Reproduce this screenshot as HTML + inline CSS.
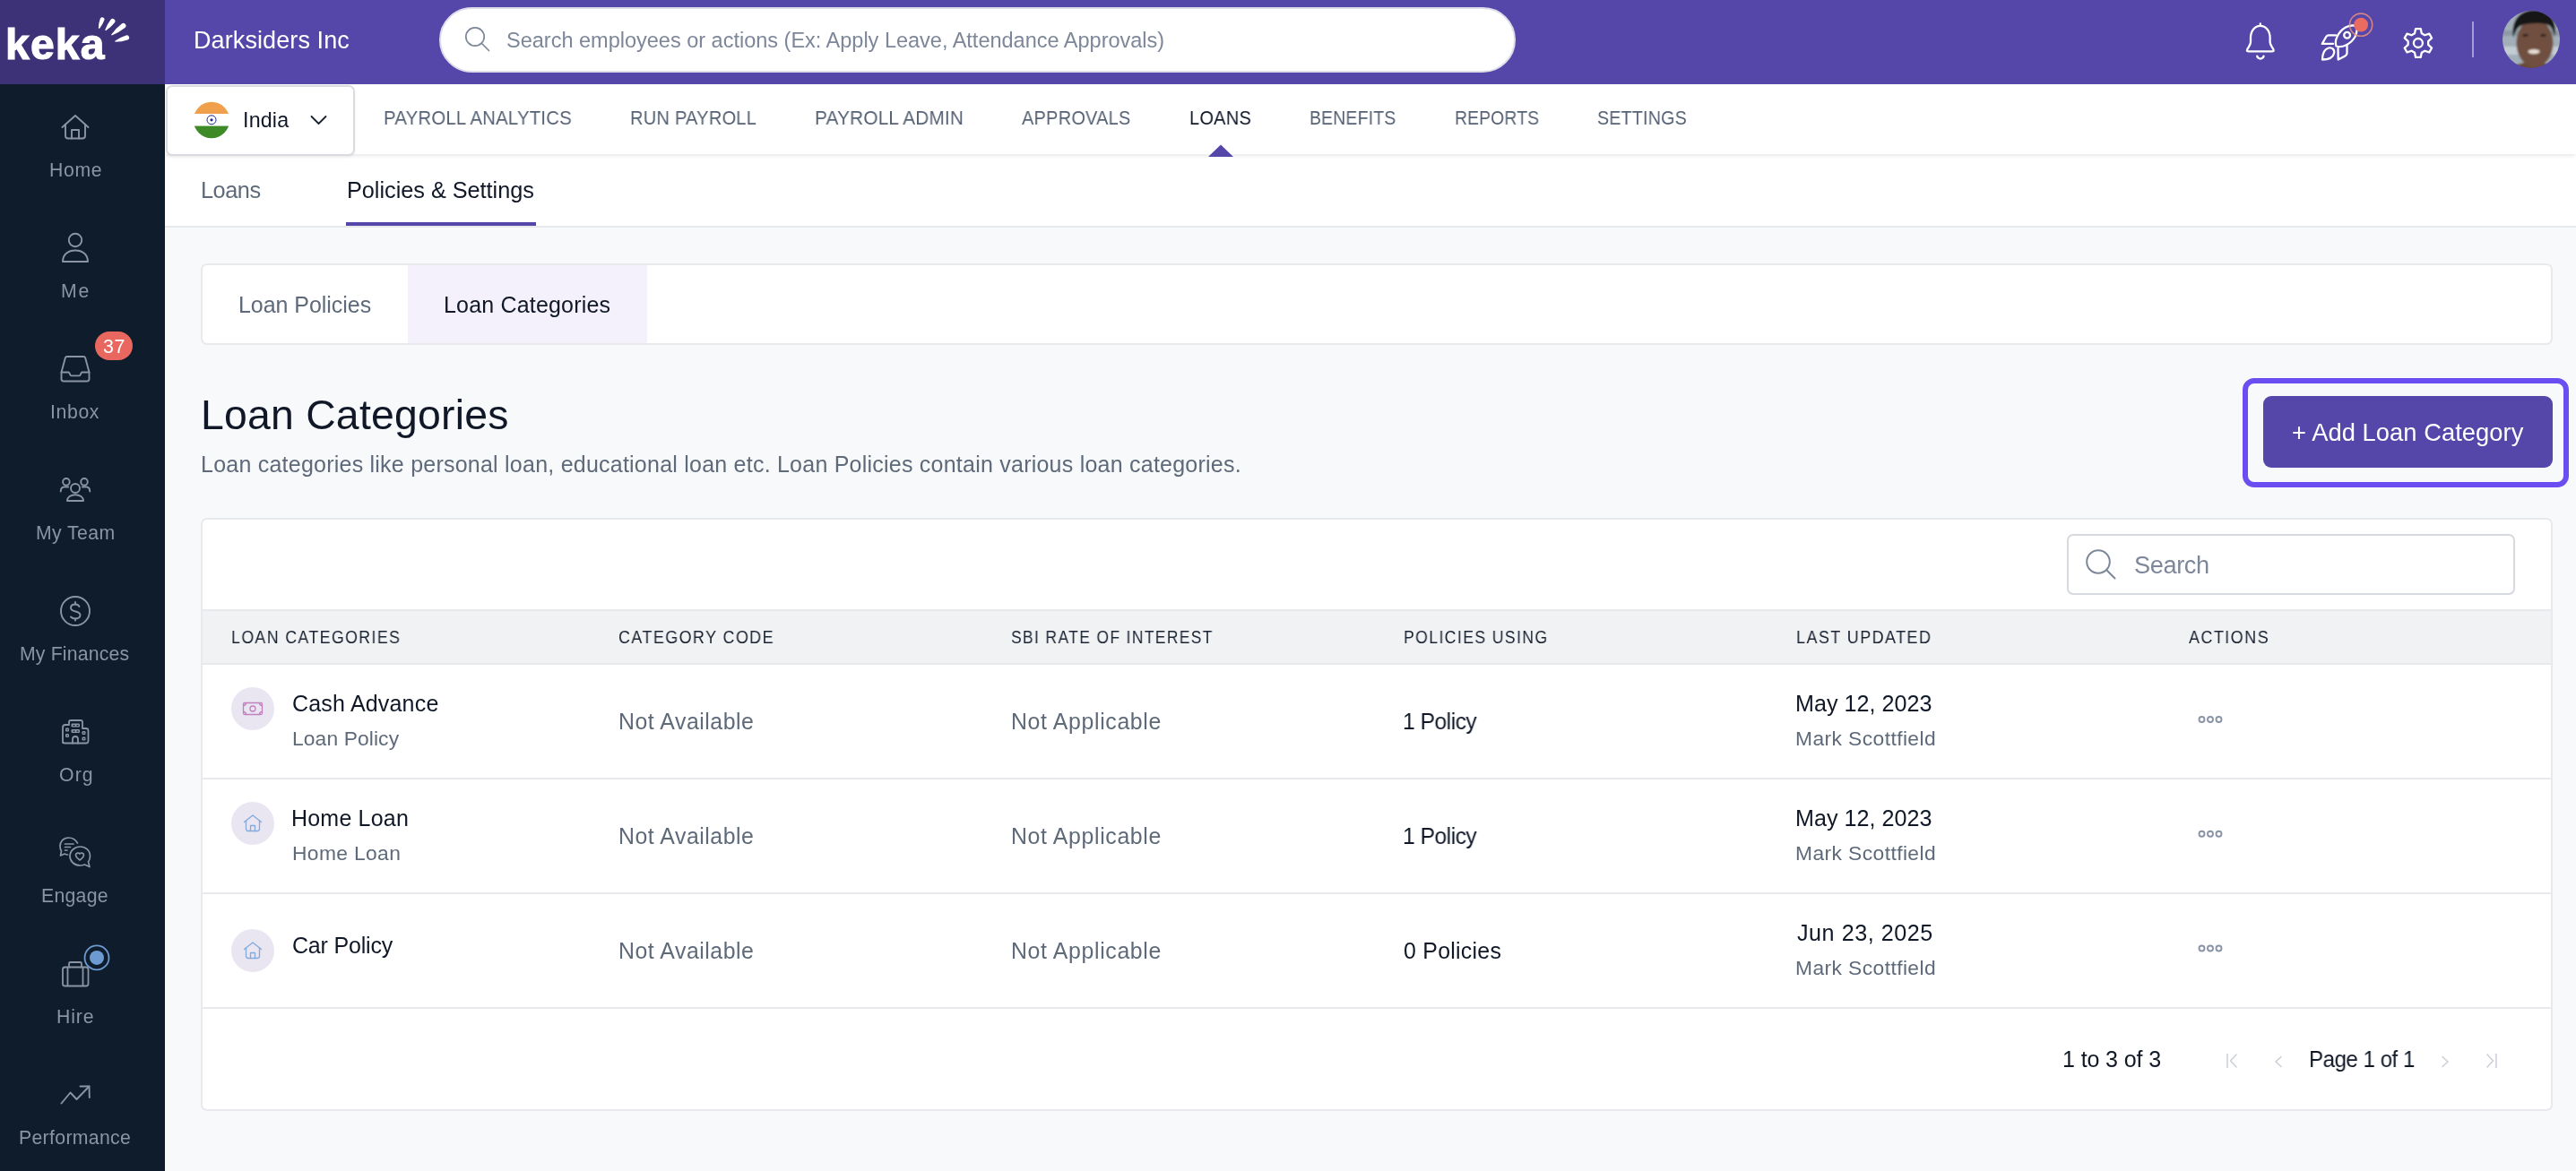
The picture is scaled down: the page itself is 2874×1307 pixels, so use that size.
<!DOCTYPE html>
<html lang="en">
<head>
<meta charset="utf-8">
<title>Keka - Loan Categories</title>
<style>
html,body{margin:0;padding:0;}
body{width:2874px;height:1307px;overflow:hidden;position:relative;background:#F8F9FB;font-family:"Liberation Sans",sans-serif;}
.a{position:absolute;box-sizing:border-box;}
.t{position:absolute;z-index:10;will-change:transform;white-space:nowrap;font-family:"Liberation Sans",sans-serif;}
svg{position:absolute;overflow:visible;}
</style>
</head>
<body>
<div class="a" style="left:184px;top:94px;width:2690px;height:1213px;background:#F8F9FB"></div>
<div class="a" style="left:0;top:0;width:2874px;height:94px;background:#5546A9"></div>
<div class="a" style="left:0;top:0;width:184px;height:94px;background:#3D3177"></div>
<div class="a" style="left:0;top:94px;width:184px;height:1213px;background:#0E1C2B"></div>
<div class="a" style="left:184px;top:94px;width:2690px;height:78px;background:#FFFFFF;box-shadow:0 3px 4px -1px rgba(20,25,40,0.10);z-index:2"></div>
<div class="a" style="left:184px;top:172px;width:2690px;height:82px;background:#FFFFFF;border-bottom:2px solid #E7E8EB;z-index:1"></div>
<div class="a" style="left:386px;top:248px;width:212px;height:4px;background:#5546A9;z-index:3"></div>
<div class="a" style="left:185px;top:94.5px;width:210.5px;height:79px;background:#FFFFFF;border:2px solid #D9DBE0;border-radius:7px;z-index:3;box-shadow:0 1px 3px rgba(0,0,0,0.06)"></div>
<svg style="left:0;top:0;z-index:4" width="2874" height="200"><polygon points="1348,175 1376,175 1362,161.5" fill="#5546A9"/></svg>
<div class="a" style="left:224px;top:294px;width:2624px;height:91px;background:#FFFFFF;border:2px solid #E8E9EC;border-radius:7px;overflow:hidden"><div class="a" style="left:229px;top:0;width:267px;height:87px;background:#F4F0FC"></div></div>
<div class="a" style="left:2502px;top:422px;width:364px;height:122px;border:6px solid #6A4EF1;border-radius:13px"></div>
<div class="a" style="left:2525px;top:442px;width:323px;height:80px;background:#5546A9;border-radius:9px"></div>
<div class="a" style="left:224px;top:578px;width:2624px;height:662px;background:#FFFFFF;border:2px solid #E8E9EC;border-radius:7px;overflow:hidden"><div class="a" style="left:0;top:100px;width:2620px;height:2px;background:#E8E9EC"></div><div class="a" style="left:0;top:102px;width:2620px;height:58px;background:#F1F2F4"></div><div class="a" style="left:0;top:160px;width:2620px;height:2px;background:#E8E9EC"></div><div class="a" style="left:0;top:288px;width:2620px;height:2px;background:#E8E9EC"></div><div class="a" style="left:0;top:416px;width:2620px;height:2px;background:#E8E9EC"></div><div class="a" style="left:0;top:544px;width:2620px;height:2px;background:#E8E9EC"></div></div>
<div class="a" style="left:2305.5px;top:595.5px;width:500.5px;height:68px;border:2px solid #D6D9DE;border-radius:7px;background:#fff"></div>
<div class="a" style="left:489.5px;top:7.5px;width:1201px;height:73px;background:#FFFFFF;border:2px solid #DDDCE8;border-radius:37px"></div>
<div class="a" style="left:106px;top:370px;width:42px;height:32px;background:#E8685F;border-radius:16px;z-index:5"></div>
<svg style="left:0;top:0;z-index:6" width="2874" height="1307" viewBox="0 0 2874 1307"><circle cx="530" cy="41" r="10.2" fill="none" stroke="#7D8799" stroke-width="1.7"/><line x1="537.5" y1="48.5" x2="545.5" y2="56.5" stroke="#7D8799" stroke-width="1.7" stroke-linecap="round"/><circle cx="2341" cy="627" r="12.8" fill="none" stroke="#7D8799" stroke-width="2"/><line x1="2350.5" y1="636.5" x2="2359.5" y2="645.5" stroke="#7D8799" stroke-width="2" stroke-linecap="round"/><clipPath id="fc"><circle cx="236" cy="134" r="20.2"/></clipPath><g clip-path="url(#fc)"><rect x="214" y="112" width="44" height="15" fill="#F0A04B"/><rect x="214" y="127" width="44" height="13.6" fill="#FFFFFF"/><rect x="214" y="140.6" width="44" height="16" fill="#3E8A27"/></g><circle cx="236" cy="133.8" r="5" fill="none" stroke="#1F2A8C" stroke-width="1"/><circle cx="236" cy="133.8" r="1.6" fill="#1F2A8C"/><polyline points="347.5,130 355.5,138 363.5,130" fill="none" stroke="#1A2230" stroke-width="1.8" stroke-linecap="round" stroke-linejoin="round"/><path d="M109.84 31.49 L110.96 31.91 Q114.79 27.03 116.33 22.48 A2.40 2.40 0 0 0 111.82 20.83 Q110.06 25.30 109.84 31.49 Z" fill="#fff"/><path d="M117.13 33.53 L118.07 34.27 Q124.32 30.09 127.88 25.33 A2.80 2.80 0 0 0 123.47 21.88 Q119.70 26.46 117.13 33.53 Z" fill="#fff"/><path d="M124.03 38.63 L124.77 39.57 Q133.25 36.06 139.40 31.07 A2.90 2.90 0 0 0 135.83 26.50 Q129.50 31.25 124.03 38.63 Z" fill="#fff"/><path d="M128.21 45.73 L128.59 46.87 Q136.28 46.65 142.30 44.54 A2.65 2.65 0 0 0 140.66 39.50 Q134.56 41.36 128.21 45.73 Z" fill="#fff"/><g fill="none" stroke="#FFFFFF" stroke-width="2.3" stroke-linecap="round" stroke-linejoin="round"><line x1="2521.8" y1="26.5" x2="2521.8" y2="28.5"/><path d="M2511 42 C2511 34 2516 28.8 2521.8 28.8 C2527.6 28.8 2532.6 34 2532.6 42 L2532.6 47 C2532.6 50 2535 52.5 2536.3 55 C2537.3 57 2536.3 57.4 2534.6 57.4 L2509 57.4 C2507.3 57.4 2506.3 57 2507.3 55 C2508.6 52.5 2511 50 2511 47 Z"/><path d="M2518.2 62.6 A3.8 3.8 0 0 0 2525.6 62.6"/></g><g fill="none" stroke="#FFFFFF" stroke-width="2.3" stroke-linecap="round" stroke-linejoin="round"><path d="M2606.5 51.5 C2604 45 2609 35 2617 30.5 C2622 28 2627 28 2628.5 29.5 C2630 31 2630 36 2627.5 41 C2623 49 2613 54 2606.5 51.5 Z"/><path d="M2606 39.3 L2598 39.3 C2596.8 39.3 2596 39.8 2595.4 40.8 L2590.8 48.9 L2603 48.9"/><path d="M2608.5 54 L2608.7 66.5 L2615.5 63 C2617.5 62 2618.5 61 2618.5 59 L2618.5 50"/><path d="M2591 66.5 C2591 60 2593 55 2598 53.5 C2602 52.5 2605 55.5 2604 59.5 C2603 64 2598 66.5 2591 66.5 Z"/><circle cx="2618.6" cy="39.2" r="3.4"/></g><circle cx="2634.1" cy="27.7" r="12.6" fill="none" stroke="#E9907F" stroke-width="1.6" opacity="0.85"/><circle cx="2634.1" cy="27.7" r="7.9" fill="#EA6B60"/><path d="M2694.00 37.29 L2695.09 32.05 L2700.71 32.05 L2701.80 37.29 L2705.23 39.27 L2710.31 37.59 L2713.12 42.46 L2709.13 46.02 L2709.13 49.98 L2713.12 53.54 L2710.31 58.41 L2705.23 56.73 L2701.80 58.71 L2700.71 63.95 L2695.09 63.95 L2694.00 58.71 L2690.57 56.73 L2685.49 58.41 L2682.68 53.54 L2686.67 49.98 L2686.67 46.02 L2682.68 42.46 L2685.49 37.59 L2690.57 39.27 Z" fill="none" stroke="#FFFFFF" stroke-width="2.3" stroke-linejoin="round"/><circle cx="2697.9" cy="48" r="5" fill="none" stroke="#FFFFFF" stroke-width="2.3"/><rect x="2758" y="24" width="2" height="40" fill="#A49BD8"/><filter id="avb" x="-20%" y="-20%" width="140%" height="140%"><feGaussianBlur stdDeviation="0.9"/></filter><clipPath id="av"><circle cx="2824" cy="44" r="32"/></clipPath><g clip-path="url(#av)"><g filter="url(#avb)"><rect x="2788" y="8" width="72" height="72" fill="#A3AFB8"/><rect x="2788" y="52" width="72" height="9" fill="#C3CCD2"/><rect x="2788" y="34" width="72" height="6" fill="#8E9AA3"/><ellipse cx="2826" cy="84" rx="30" ry="15" fill="#6B4A36"/><ellipse cx="2828" cy="48" rx="20.5" ry="27" fill="#6F5040"/><path d="M2804 42 C2801 22 2812 11 2828 11 C2846 11 2853 24 2850.5 41 C2848 33 2846 29 2842 27.5 C2835 25.5 2820 25.5 2813 28.5 C2808 31 2806 36 2804 42 Z" fill="#151515"/><ellipse cx="2817.5" cy="39.5" rx="3.2" ry="1.4" fill="#2B1F19"/><ellipse cx="2837.5" cy="39.5" rx="3.2" ry="1.4" fill="#2B1F19"/><ellipse cx="2827" cy="57.6" rx="6.5" ry="2.7" fill="#E6DCD4"/></g></g><g fill="none" stroke="#8B94A3" stroke-width="1.9" stroke-linecap="round" stroke-linejoin="round"><path d="M69.5 142 L84 129 L98.5 142"/><path d="M73 139 L73 151.5 C73 153.5 74 154.5 76 154.5 L92 154.5 C94 154.5 95 153.5 95 151.5 L95 139"/><path d="M80 154.5 L80 145 L88 145 L88 154.5"/><circle cx="84" cy="268" r="7.2"/><path d="M70 292 C70 284 76 279.5 84 279.5 C92 279.5 98 284 98 292 Z"/><path d="M68.5 415.5 L72.8 399.5 C73.1 398.5 73.8 398 74.8 398 L93.2 398 C94.2 398 94.9 398.5 95.2 399.5 L99.5 415.5"/><path d="M68.5 415.5 L68.5 423 C68.5 424.5 69.5 425.5 71 425.5 L97 425.5 C98.5 425.5 99.5 424.5 99.5 423 L99.5 415.5 L92 415.5 C91.3 415.5 90.9 415.8 90.6 416.4 L89.5 418.6 C89.2 419.2 88.8 419.4 88.1 419.4 L79.9 419.4 C79.2 419.4 78.8 419.2 78.5 418.6 L77.4 416.4 C77.1 415.8 76.7 415.5 76 415.5 Z"/><circle cx="73.9" cy="537.8" r="3.8"/><circle cx="94" cy="537.8" r="3.8"/><circle cx="84" cy="545" r="5"/><path d="M67.7 548.6 C67.7 545 70 543.3 73 543.3 L76.2 543.5"/><path d="M100.3 548.6 C100.3 545 98 543.3 95 543.3 L91.8 543.5"/><path d="M75 559 C75 555 79 552.2 84 552.2 C89 552.2 93 555 93 559 Z"/><circle cx="84" cy="682" r="16"/><path d="M88.5 677 C87.5 675 86 674.5 84 674.5 C81 674.5 79 676 79 678.5 C79 684 89.5 681 89.5 686.5 C89.5 689 87 690.5 84 690.5 C81.5 690.5 80 689.5 79 688.5"/><line x1="84" y1="672" x2="84" y2="674.5"/><line x1="84" y1="690.5" x2="84" y2="692.5"/></g><g fill="none" stroke="#8B94A3" stroke-width="1.8" stroke-linecap="round" stroke-linejoin="round"><path d="M70 829 L70 812 C70 810 71 809 73 809 L77 809 L77 806 C77 805 78 804 79 804 L90 804 C91 804 92 805 92 806 L92 813 L96 813 C97.5 813 98.5 814 98.5 815.5 L98.5 827 C98.5 828.5 97.5 829.5 96 829.5 L72.5 829.5 C71 829.5 70 828.5 70 827 Z"/><path d="M81 829.5 L81 825 C81 823 82 822 84 822 C86 822 87 823 87 825 L87 829.5"/></g><g fill="#8B94A3"><rect x="79.5" y="807.5" width="9.5" height="4" rx="1.3"/><rect x="79.5" y="814" width="9.5" height="4" rx="1.3"/><rect x="73" y="812.5" width="4" height="4" rx="1.2"/><rect x="73" y="819" width="4" height="4" rx="1.2"/><rect x="91.5" y="816" width="4" height="4" rx="1.2"/><rect x="91.5" y="822.5" width="4" height="4" rx="1.2"/></g><g fill="#0E1C2B"><rect x="81.5" y="809" width="2" height="1.2"/><rect x="85.5" y="809" width="2" height="1.2"/><rect x="81.5" y="815.5" width="2" height="1.2"/><rect x="85.5" y="815.5" width="2" height="1.2"/><rect x="74.5" y="814" width="1.2" height="1.2"/><rect x="74.5" y="820.5" width="1.2" height="1.2"/><rect x="93" y="817.5" width="1.2" height="1.2"/><rect x="93" y="824" width="1.2" height="1.2"/></g><g fill="none" stroke="#8B94A3" stroke-width="1.7" stroke-linecap="round" stroke-linejoin="round"><path d="M86.5 941 C84.5 937.5 81 935 76.5 935 C70.5 935 67 939.5 67 944.5 C67 946.5 67.5 948.5 68.5 950 L67.5 955 L72 953 C73 953.5 74.5 954 75.5 954"/><line x1="72.5" y1="942" x2="82" y2="942"/><line x1="72.5" y1="945.5" x2="78.5" y2="945.5"/><line x1="72.5" y1="949" x2="75" y2="949"/><path d="M100 967.5 L98.5 962 C99.5 960.5 100.5 958 100.5 955.5 C100.5 949 95.5 945 89.5 945 C83.5 945 78 949.5 78 955.5 C78 961.5 83 966 89.5 966 C91.5 966 93 965.5 94.5 965 Z"/><path d="M89 953 C88 951.5 84.5 951.5 84.5 954.5 C84.5 957 87.5 958.5 89 960 C90.5 958.5 93.5 957 93.5 954.5 C93.5 951.5 90 951.5 89 953 Z"/></g><g fill="none" stroke="#8B94A3" stroke-width="1.8" stroke-linecap="round" stroke-linejoin="round"><rect x="70" y="1079.5" width="28.5" height="21" rx="2.5"/><path d="M77 1079.5 L77 1075.5 C77 1074.5 77.5 1074 78.5 1074 L89.5 1074 C90.5 1074 91 1074.5 91 1075.5 L91 1079.5"/><line x1="75.5" y1="1080" x2="75.5" y2="1100"/><line x1="92.5" y1="1080" x2="92.5" y2="1100"/></g><circle cx="108" cy="1068.9" r="13.5" fill="none" stroke="#6D9BD1" stroke-width="1.8"/><circle cx="108" cy="1068.9" r="8" fill="#6D9BD1"/><polyline points="68.5,1231.5 78.5,1219.5 85.5,1227 99.5,1212.5" fill="none" stroke="#8B94A3" stroke-width="1.9" stroke-linecap="round" stroke-linejoin="round"/><polyline points="89.5,1212.5 99.5,1212.5 99.8,1225" fill="none" stroke="#8B94A3" stroke-width="1.9" stroke-linecap="round" stroke-linejoin="round"/><circle cx="282" cy="791" r="24" fill="#E9E6F2"/><circle cx="282" cy="919" r="24" fill="#E9E6F2"/><circle cx="282" cy="1061" r="24" fill="#E9E6F2"/><g fill="none" stroke="#C47FC0" stroke-width="1.3"><rect x="271.5" y="784.5" width="21" height="13" rx="1.5"/><circle cx="282" cy="791" r="3"/><path d="M271.5 787.5 C273.5 787.5 274.5 786.5 274.5 784.5 M289.5 784.5 C289.5 786.5 290.5 787.5 292.5 787.5 M271.5 794.5 C273.5 794.5 274.5 795.5 274.5 797.5 M289.5 797.5 C289.5 795.5 290.5 794.5 292.5 794.5"/></g><g fill="none" stroke="#82AADD" stroke-width="1.3" stroke-linecap="round" stroke-linejoin="round"><path d="M272.5 917.5 L282 910 L291.5 917.5"/><path d="M274.5 916 L274.5 925 C274.5 926.5 275.5 927.5 277 927.5 L287 927.5 C288.5 927.5 289.5 926.5 289.5 925 L289.5 916"/><path d="M279.5 927.5 L279.5 921.5 L284.5 921.5 L284.5 927.5"/></g><g fill="none" stroke="#82AADD" stroke-width="1.3" stroke-linecap="round" stroke-linejoin="round"><path d="M272.5 1059.5 L282 1052 L291.5 1059.5"/><path d="M274.5 1058 L274.5 1067 C274.5 1068.5 275.5 1069.5 277 1069.5 L287 1069.5 C288.5 1069.5 289.5 1068.5 289.5 1067 L289.5 1058"/><path d="M279.5 1069.5 L279.5 1063.5 L284.5 1063.5 L284.5 1069.5"/></g><circle cx="2456.5" cy="803.0" r="3" fill="none" stroke="#8A94A6" stroke-width="1.9"/><circle cx="2466" cy="803.0" r="3" fill="none" stroke="#8A94A6" stroke-width="1.9"/><circle cx="2475.5" cy="803.0" r="3" fill="none" stroke="#8A94A6" stroke-width="1.9"/><circle cx="2456.5" cy="930.75" r="3" fill="none" stroke="#8A94A6" stroke-width="1.9"/><circle cx="2466" cy="930.75" r="3" fill="none" stroke="#8A94A6" stroke-width="1.9"/><circle cx="2475.5" cy="930.75" r="3" fill="none" stroke="#8A94A6" stroke-width="1.9"/><circle cx="2456.5" cy="1058.5" r="3" fill="none" stroke="#8A94A6" stroke-width="1.9"/><circle cx="2466" cy="1058.5" r="3" fill="none" stroke="#8A94A6" stroke-width="1.9"/><circle cx="2475.5" cy="1058.5" r="3" fill="none" stroke="#8A94A6" stroke-width="1.9"/><g fill="none" stroke="#C9CED6" stroke-width="1.5" stroke-linecap="round" stroke-linejoin="round"><line x1="2485" y1="1176.5" x2="2485" y2="1191.5"/><polyline points="2495,1177 2488.5,1184 2495,1191"/><polyline points="2545,1179.5 2539,1185 2545,1190.5"/><polyline points="2725,1179.5 2731,1185 2725,1190.5"/><line x1="2785" y1="1176.5" x2="2785" y2="1191.5"/><polyline points="2775,1177 2781.5,1184 2775,1191"/></g></svg>
<div class="t" style="left:6px;top:26px;font-size:48px;line-height:48px;font-weight:700;color:#fff;letter-spacing:1.2px;-webkit-text-stroke:1.2px #fff;z-index:7">keka</div>
<div class="t" style="left:216.00px;top:31.90px;font-size:27.03px;line-height:27.03px;letter-spacing:0.090px;color:#FFFFFF;">Darksiders Inc</div>
<div class="t" style="left:564.54px;top:34.10px;font-size:23.55px;line-height:23.55px;letter-spacing:-0.022px;color:#7D8799;">Search employees or actions (Ex: Apply Leave, Attendance Approvals)</div>
<div class="t" style="left:271.00px;top:123.00px;font-size:23.26px;line-height:23.26px;letter-spacing:0.166px;color:#101828;">India</div>
<div class="t" style="left:428.05px;top:121.90px;font-size:21.51px;line-height:21.51px;letter-spacing:0.215px;color:#566275;transform:scaleX(0.9476);transform-origin:0 0;">PAYROLL ANALYTICS</div>
<div class="t" style="left:703.07px;top:121.90px;font-size:21.51px;line-height:21.51px;letter-spacing:0.215px;color:#566275;transform:scaleX(0.9345);transform-origin:0 0;">RUN PAYROLL</div>
<div class="t" style="left:909.03px;top:121.90px;font-size:21.51px;line-height:21.51px;letter-spacing:0.215px;color:#566275;transform:scaleX(0.9656);transform-origin:0 0;">PAYROLL ADMIN</div>
<div class="t" style="left:1140.15px;top:121.90px;font-size:21.51px;line-height:21.51px;letter-spacing:0.215px;color:#566275;transform:scaleX(0.9305);transform-origin:0 0;">APPROVALS</div>
<div class="t" style="left:1327.07px;top:121.90px;font-size:21.51px;line-height:21.51px;letter-spacing:0.215px;color:#101828;transform:scaleX(0.9328);transform-origin:0 0;">LOANS</div>
<div class="t" style="left:1461.10px;top:121.90px;font-size:21.51px;line-height:21.51px;letter-spacing:0.215px;color:#566275;transform:scaleX(0.9022);transform-origin:0 0;">BENEFITS</div>
<div class="t" style="left:1623.10px;top:121.90px;font-size:21.51px;line-height:21.51px;letter-spacing:0.215px;color:#566275;transform:scaleX(0.8972);transform-origin:0 0;">REPORTS</div>
<div class="t" style="left:1782.30px;top:121.90px;font-size:21.51px;line-height:21.51px;letter-spacing:0.215px;color:#566275;transform:scaleX(0.9146);transform-origin:0 0;">SETTINGS</div>
<div class="t" style="left:223.69px;top:200.00px;font-size:25.29px;line-height:25.29px;letter-spacing:-0.445px;color:#5E6a7a;">Loans</div>
<div class="t" style="left:387.46px;top:200.10px;font-size:25.29px;line-height:25.29px;letter-spacing:-0.028px;color:#101828;">Policies &amp; Settings</div>
<div class="t" style="left:266.31px;top:327.80px;font-size:25.0px;line-height:25.0px;letter-spacing:-0.043px;color:#5E6a7a;">Loan Policies</div>
<div class="t" style="left:495.00px;top:328.00px;font-size:25.0px;line-height:25.0px;letter-spacing:0.179px;color:#101828;">Loan Categories</div>
<div class="t" style="left:224.15px;top:439.90px;font-size:46.37px;line-height:46.37px;letter-spacing:0.229px;color:#101828;">Loan Categories</div>
<div class="t" style="left:223.69px;top:505.80px;font-size:25.0px;line-height:25.0px;letter-spacing:0.231px;color:#5E6a7a;">Loan categories like personal loan, educational loan etc. Loan Policies contain various loan categories.</div>
<div class="t" style="left:2557.00px;top:468.90px;font-size:27.33px;line-height:27.33px;letter-spacing:0.048px;color:#FFFFFF;">+ Add Loan Category</div>
<div class="t" style="left:2380.62px;top:616.90px;font-size:27.18px;line-height:27.18px;letter-spacing:-0.396px;color:#7D8799;">Search</div>
<div class="t" style="left:258.40px;top:701.90px;font-size:19.48px;line-height:19.48px;letter-spacing:1.558px;color:#1A2332;transform:scaleX(0.9098);transform-origin:0 0;">LOAN CATEGORIES</div>
<div class="t" style="left:689.99px;top:701.90px;font-size:19.48px;line-height:19.48px;letter-spacing:1.558px;color:#1A2332;transform:scaleX(0.9207);transform-origin:0 0;">CATEGORY CODE</div>
<div class="t" style="left:1127.76px;top:701.90px;font-size:19.48px;line-height:19.48px;letter-spacing:1.558px;color:#1A2332;transform:scaleX(0.8942);transform-origin:0 0;">SBI RATE OF INTEREST</div>
<div class="t" style="left:1566.33px;top:701.90px;font-size:19.48px;line-height:19.48px;letter-spacing:1.558px;color:#1A2332;transform:scaleX(0.9042);transform-origin:0 0;">POLICIES USING</div>
<div class="t" style="left:2004.00px;top:701.90px;font-size:19.48px;line-height:19.48px;letter-spacing:1.558px;color:#1A2332;transform:scaleX(0.9226);transform-origin:0 0;">LAST UPDATED</div>
<div class="t" style="left:2442.00px;top:701.90px;font-size:19.48px;line-height:19.48px;letter-spacing:1.558px;color:#1A2332;transform:scaleX(0.9241);transform-origin:0 0;">ACTIONS</div>
<div class="t" style="left:326.15px;top:772.90px;font-size:25.0px;line-height:25.0px;letter-spacing:0.190px;color:#101828;">Cash Advance</div>
<div class="t" style="left:325.68px;top:812.80px;font-size:22.82px;line-height:22.82px;letter-spacing:0.110px;color:#5E6a7a;">Loan Policy</div>
<div class="t" style="left:690.00px;top:793.90px;font-size:24.85px;line-height:24.85px;letter-spacing:0.524px;color:#5E6a7a;">Not Available</div>
<div class="t" style="left:1128.31px;top:793.90px;font-size:24.85px;line-height:24.85px;letter-spacing:0.652px;color:#5E6a7a;">Not Applicable</div>
<div class="t" style="left:1564.69px;top:793.90px;font-size:24.85px;line-height:24.85px;letter-spacing:-0.497px;color:#101828;transform:scaleX(0.9907);transform-origin:0 0;">1 Policy</div>
<div class="t" style="left:2003.00px;top:773.00px;font-size:25.15px;line-height:25.15px;letter-spacing:0.010px;color:#101828;">May 12, 2023</div>
<div class="t" style="left:2003.37px;top:812.80px;font-size:22.82px;line-height:22.82px;letter-spacing:0.412px;color:#5E6a7a;">Mark Scottfield</div>
<div class="t" style="left:325.15px;top:900.90px;font-size:25.0px;line-height:25.0px;letter-spacing:0.198px;color:#101828;">Home Loan</div>
<div class="t" style="left:325.68px;top:940.80px;font-size:22.82px;line-height:22.82px;letter-spacing:0.365px;color:#5E6a7a;">Home Loan</div>
<div class="t" style="left:690.00px;top:921.90px;font-size:24.85px;line-height:24.85px;letter-spacing:0.524px;color:#5E6a7a;">Not Available</div>
<div class="t" style="left:1128.31px;top:921.90px;font-size:24.85px;line-height:24.85px;letter-spacing:0.652px;color:#5E6a7a;">Not Applicable</div>
<div class="t" style="left:1564.69px;top:921.90px;font-size:24.85px;line-height:24.85px;letter-spacing:-0.497px;color:#101828;transform:scaleX(0.9907);transform-origin:0 0;">1 Policy</div>
<div class="t" style="left:2003.00px;top:901.00px;font-size:25.15px;line-height:25.15px;letter-spacing:0.010px;color:#101828;">May 12, 2023</div>
<div class="t" style="left:2003.37px;top:940.80px;font-size:22.82px;line-height:22.82px;letter-spacing:0.412px;color:#5E6a7a;">Mark Scottfield</div>
<div class="t" style="left:326.23px;top:1042.80px;font-size:25.0px;line-height:25.0px;letter-spacing:-0.183px;color:#101828;">Car Policy</div>
<div class="t" style="left:690.00px;top:1049.90px;font-size:24.85px;line-height:24.85px;letter-spacing:0.524px;color:#5E6a7a;">Not Available</div>
<div class="t" style="left:1128.31px;top:1049.90px;font-size:24.85px;line-height:24.85px;letter-spacing:0.652px;color:#5E6a7a;">Not Applicable</div>
<div class="t" style="left:1565.68px;top:1049.90px;font-size:24.85px;line-height:24.85px;letter-spacing:0.285px;color:#101828;">0 Policies</div>
<div class="t" style="left:2005.00px;top:1029.00px;font-size:25.15px;line-height:25.15px;letter-spacing:0.530px;color:#101828;">Jun 23, 2025</div>
<div class="t" style="left:2003.37px;top:1068.80px;font-size:22.82px;line-height:22.82px;letter-spacing:0.412px;color:#5E6a7a;">Mark Scottfield</div>
<div class="t" style="left:2301.30px;top:1170.00px;font-size:25.07px;line-height:25.07px;letter-spacing:-0.137px;color:#101828;">1 to 3 of 3</div>
<div class="t" style="left:2575.54px;top:1170.00px;font-size:25.07px;line-height:25.07px;letter-spacing:-0.501px;color:#101828;transform:scaleX(0.9608);transform-origin:0 0;">Page 1 of 1</div>
<div class="t" style="left:54.77px;top:179.00px;font-size:21.22px;line-height:21.22px;letter-spacing:0.657px;color:#8B94A3;">Home</div>
<div class="t" style="left:68.46px;top:314.00px;font-size:21.22px;line-height:21.22px;letter-spacing:1.865px;color:#8B94A3;">Me</div>
<div class="t" style="left:55.76px;top:449.00px;font-size:21.22px;line-height:21.22px;letter-spacing:0.641px;color:#8B94A3;">Inbox</div>
<div class="t" style="left:40.00px;top:584.00px;font-size:21.22px;line-height:21.22px;letter-spacing:0.398px;color:#8B94A3;">My Team</div>
<div class="t" style="left:22.15px;top:719.00px;font-size:21.22px;line-height:21.22px;letter-spacing:0.171px;color:#8B94A3;">My Finances</div>
<div class="t" style="left:65.62px;top:854.00px;font-size:21.22px;line-height:21.22px;letter-spacing:1.140px;color:#8B94A3;">Org</div>
<div class="t" style="left:46.46px;top:989.00px;font-size:21.22px;line-height:21.22px;letter-spacing:0.283px;color:#8B94A3;">Engage</div>
<div class="t" style="left:63.00px;top:1124.00px;font-size:21.22px;line-height:21.22px;letter-spacing:0.862px;color:#8B94A3;">Hire</div>
<div class="t" style="left:21.15px;top:1259.00px;font-size:21.22px;line-height:21.22px;letter-spacing:0.333px;color:#8B94A3;">Performance</div>
<div class="t" style="left:115.10px;top:376.90px;font-size:21.37px;line-height:21.37px;letter-spacing:0.621px;color:#FFFFFF;">37</div>
</body>
</html>
